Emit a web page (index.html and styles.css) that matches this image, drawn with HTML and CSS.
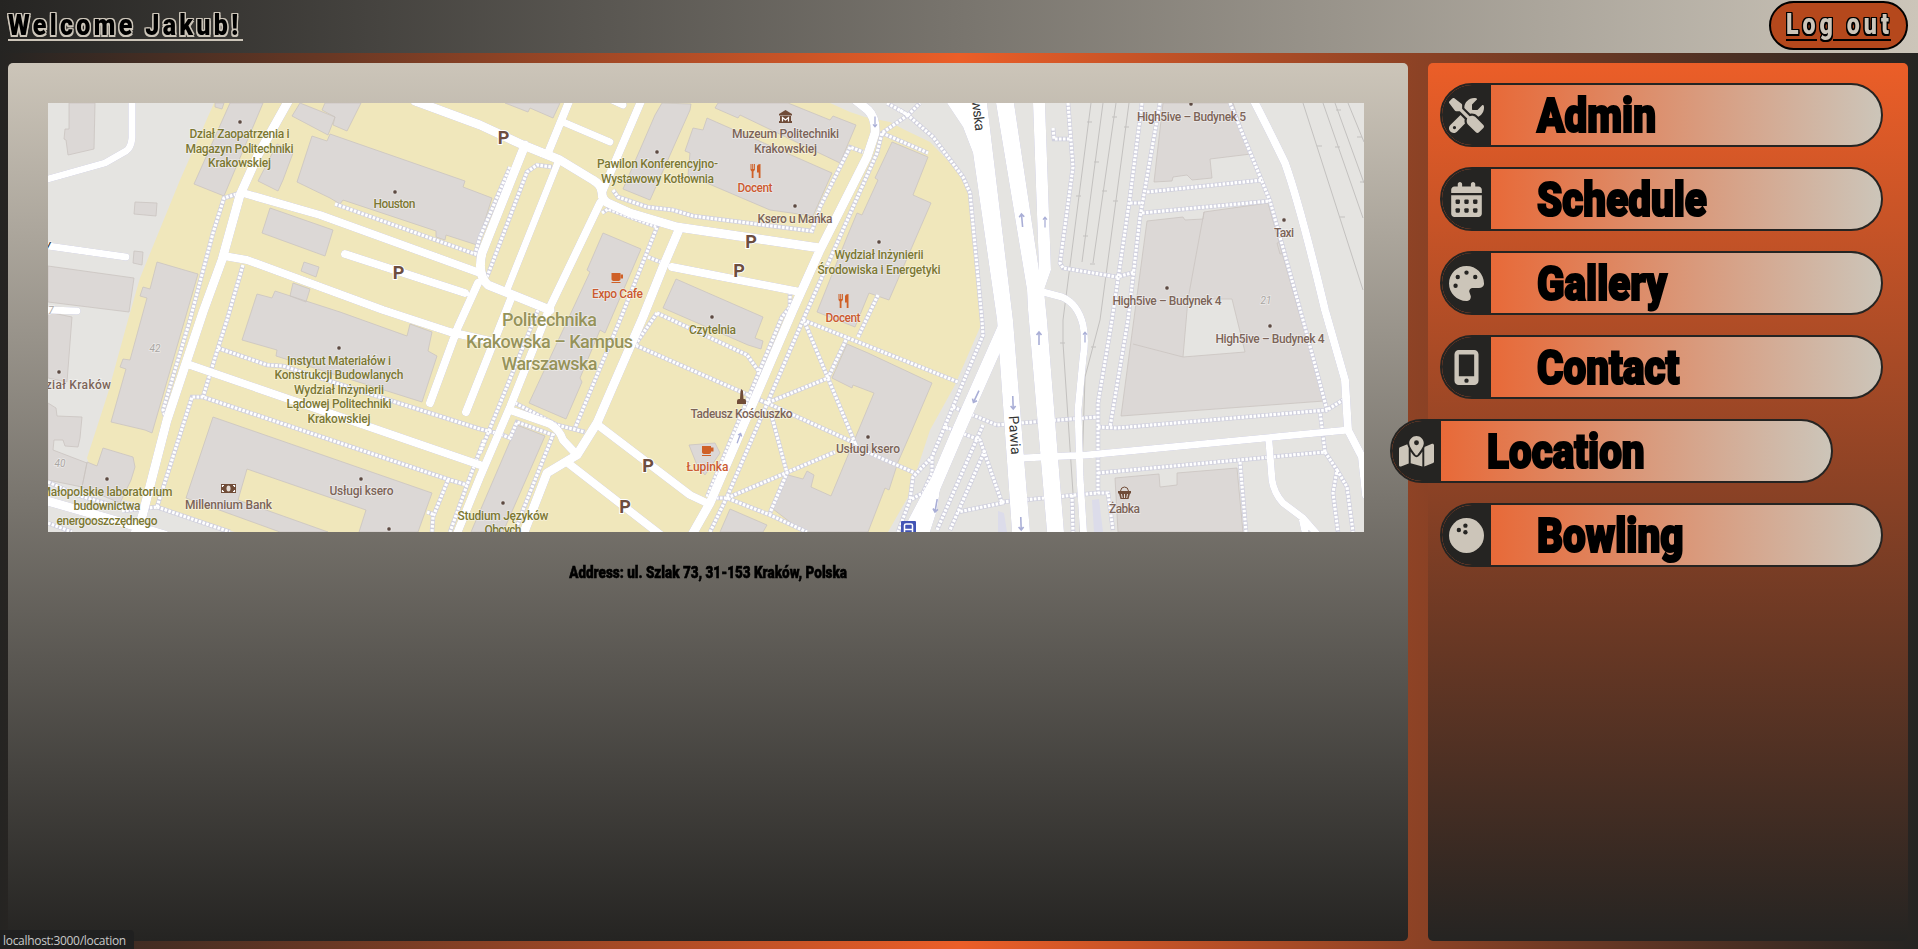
FILE: index.html
```html
<!DOCTYPE html>
<html lang="en">
<head>
<meta charset="utf-8">
<title>Location</title>
<link rel="stylesheet" href="styles.css">
</head>
<body>
<header class="topbar">
  <h1 class="welcome"><span class="squeeze">Welcome Jakub!</span></h1>
  <a class="logout"><span class="logout-line"><span class="squeeze">Log out</span></span></a>
</header>
<div class="layout">
<main class="content">
<svg class="map" viewBox="48 103 1316 429">
  <defs>
    <g id="walks">
      <path d="M240 193L224 198L213 233L190 320L163 410L166 419M243 265L227 320L218 348L203 397M218 348L267 365L283 366L367 393L480 429L500 434L510 438L517 422L553 435L523 510L515 532"/>
      <path d="M157 507L192 397L203 397L450 480L467 485M157 507L230 532M122 511L157 507M48 482L80 496L122 508M48 523L72 532M484 440L467 485L450 532M448 480L433 517L432 532M427 512L435 515"/>
      <path d="M335 204L475 254L480 237L510 167M487 277L527 172L537 165L552 167M613 190L618 197L647 207L673 210L693 216L780 227L812 231L820 207L850 147L863 152"/>
      <path d="M602 213L608 209L657 227L620 320L575 428M648 257L663 263M515 403L557 425L585 432M538 310L480 453M657 313L747 355L760 373M657 313L635 345L737 390L767 403"/>
      <path d="M887 103L908 115L920 103M908 115L882 133L877 153L803 320L727 497L710 532M882 133L928 153M790 292L790 307L782 317L707 497"/>
      <path d="M803 320L958 382M805 323L855 443L767 403L828 378L847 338M858 337L878 295M770 410L787 473L770 513M727 498L835 452M716 498L727 498L770 515L807 532M867 452L915 473"/>
      <path d="M900 110L910 117L933 137L963 177L970 193L982 320L983 335L962 385L932 457L913 477L910 500L898 532M932 457L932 473L923 493L910 500M943 427L948 429"/>
      <path d="M953 407L997 425L1033 422L1097 417M945 427L980 440L1002 503L958 512M983 425L937 530M985 450L950 530M1002 502L1097 493L1108 493L1113 530M1072 495L1073 532"/>
      <path d="M1068 103L1073 167L1060 263L1063 268L1117 277L1135 272M1053 128L1054 139L1070 139M1142 103L1130 197L1112 320L1098 403L1098 493M1160 103L1140 217L1128 320L1110 427M1147 192L1263 180M1142 213L1270 201M1130 203L1143 203"/>
      <path d="M1230 103L1270 201L1303 320L1327 410L1343 400M1098 427L1117 428L1327 410M1098 473L1325 452L1320 412M1325 452L1337 470L1333 493L1338 532M1337 470L1347 487L1353 532M1240 462L1246 532"/>
    </g>
    <g id="cup"><path d="M-6 -5H3V1Q3 3 0 3H-3Q-6 3 -6 1ZM-6 4H3V5H-6Z"/><path class="ring" d="M3 -3.500H5.500V0.500H3"/></g>
    <g id="fork"><path d="M-5 -7H-4V-2H-3.300V-7H-2.300V-2H-1.600V-7H-.6V-1L-2 .5V7H-3.800V.5L-5 -1ZM1.500 -5Q2 -7 5 -7V7H3.200V1.500H1.500Z"/></g>
    <g id="arrow"><path d="M0 7V-6M-2.500 -3L0 -6L2.500 -3"/></g>
  </defs>
  <rect class="ground" x="48" y="103" width="1316" height="429"/>
  <path class="campus" d="M214 103H830L850 112L865 117L890 122L905 130L930 142L955 168L968 190L972 215L981 325L955 385L930 430L908 497L888 532H235L155 507L100 495L87 458L108 393L128 320L140 278L180 180Z"/>
  <g class="buildings">
    <path d="M69 103H95L94 149L68 155L66 140L64 139L65 129H69ZM230 103H263L229 184L224 196L194 184ZM215 103H224L222 109L215 107ZM300 103L335 117L328 135L292 116ZM325 103H361L347 131L333 125L335 117L322 110ZM277 144L293 153L283 180L278 191L258 181Z"/>
    <path d="M312 136L327 141L330 134L465 181L463 187L492 198L477 245L446 235L445 240L436 237V231L343 200L340 204L330 198L297 182ZM270 208L333 230L325 256L262 233ZM135 202L157 203L156 216L134 214ZM134 251L143 252L142 265L133 263ZM48 266L134 278L129 312L48 302Z"/>
    <path d="M157 262L198 274L152 433L145 430L111 422L126 369L120 367L123 359L130 360L147 298L140 296L143 287L150 289ZM304 262L319 267L316 277L301 271ZM293 283L310 289L306 302L290 296ZM257 294L272 298L275 291L340 312L407 336L410 324L432 332L428 351L437 356L422 402L276 356L277 350L242 340Z"/>
    <path d="M48 312L72 317L67 382L48 378ZM48 403L56 408L57 416L82 417L80 438L78 447L65 446L63 440H54L53 450L87 463L82 487L48 480ZM103 448L133 457L135 467L131 480L120 503L82 487L87 462L97 466ZM213 417L432 493L418 532H359L366 510L247 469L238 500L328 532H280L186 498Z"/>
    <path d="M505 103H560L553 118L530 108L528 112ZM662 103L691 104L690 110L650 200L623 189L655 115ZM718 103H788L830 120L833 116L856 125L840 163L740 115L738 118L715 108ZM707 118L832 173L813 216L770 210L688 175L690 153L685 151L693 128L703 130Z"/>
    <path d="M892 142L928 157L913 195L931 203L889 300L869 293L855 327L817 312L847 237L857 213L862 215L878 180L875 178ZM603 233L641 249L605 333L600 330L580 378L582 382L566 419L529 403L590 272L587 270ZM676 279L763 317L755 338L763 341L761 349L748 345L663 308Z"/>
    <path d="M847 344L868 353L932 383L912 430L898 462L889 490L885 488L868 532H803L773 509L788 475L803 479L807 471L814 475L811 487L831 496L874 393L853 385L852 388L832 378ZM689 445L715 443L720 453L705 475L697 465ZM730 509L767 525L763 532H720ZM517 425L545 436L503 532H471Z"/>
    <g class="east">
      <path d="M1163 103H1233L1251 154L1210 159L1212 178L1192 180L1187 175L1173 177L1172 181L1154 182ZM1147 221L1183 217L1185 220L1203 219L1204 212L1268 203L1324 401L1121 416ZM1115 478L1159 474L1160 487L1177 485V473L1237 468L1243 532H1118ZM1277 243L1283 242L1286 253L1280 254Z"/>
      <path class="yard" d="M1188 299H1232L1245 352L1183 357Z"/>
      <path class="seam" d="M1204 212L1188 299M1133 344L1183 357"/>
    </g>
  </g>
  <g class="rails"><path d="M1091 103L1063 320V343L1073 493V532M1103 103L1082 262M1116 103L1093 263M1129 103L1100 320L1085 377L1080 532M1303 103L1363 290M1323 103L1363 218M1335 103L1364 183M1348 103L1364 142"/><path d="M1087 122h5M1112 117h5M1124 127h5M1094 162h5M1102 191h5M1076 196h5M1113 201h5M1083 236h5M1090 264h5M1060 343h5M1091 347h5M1317 146h5M1335 147h5M1336 110h5M1340 217h5M1357 137h5M1360 182h5"/></g>
  <use class="walk-edge" href="#walks"/>
  <use class="walk-dots" href="#walks"/>
  <g class="roads">
    <path class="w7" d="M132 98V138Q131 148 126 151L105 163L48 179M48 246L126 257M48 310L77 311M563 122L610 142M610 99L623 105M558 162L507 290M1043 292L1062 297Q1078 304 1083 325Q1086 340 1083 358L1078 410L1080 477L1084 540M1023 458L1087 455L1348 430M1269 442L1272 480Q1274 493 1283 503L1303 518L1317 534M1302 518L1306 536"/>
    <path class="w8" d="M243 193L320 215L480 273M224 256L247 260L383 310L450 332L499 343M345 254L465 293M570 99L548 153M642 99L603 190M478 283L458 327L430 403M512 296L466 412M600 203L550 307L510 407L480 477L456 536M190 365L480 465M672 267L713 275L800 292M510 410L550 424Q560 430 563 440L577 455M598 425L690 495L707 503M568 463L662 536M1253 99Q1273 138 1285 163Q1300 205 1325 310L1345 380L1348 430L1362 457L1366 495"/>
    <path class="w9" d="M290 98L258 155L240 195L222 260L203 312L167 420L142 517L132 540M44 500L145 529L165 535M415 101L480 125L523 145L560 160L593 180Q602 185 602 193Q602 200 608 203L630 213L677 227L820 248M525 145L482 253Q477 275 488 285L550 310M678 232L663 267L643 317L597 423L577 455L547 473L521 540M853 98L868 110Q876 118 875 133L867 157L820 250L793 310L710 503L689 540"/>
    <path class="w12" d="M1003 330L960 427L933 490L917 522"/>
    <path class="wide" d="M947 103H987L1013 320L1030 532H1012L1000 363L997 320L973 153L963 127ZM996 103H1014L1039 270L1033 103H1045L1051 270L1044 290L1047 320L1064 532H1047L1028 310L1027 290ZM945 455L937 510L930 532H902L924 490Z"/>
  </g>
  <path class="ramp" d="M998 511L1004 513L1007 532H998ZM1092 500L1099 499L1103 532H1094Z"/>
  <g class="arrows">
    <use href="#arrow" transform="translate(1022 220) rotate(-5)"/><use href="#arrow" transform="translate(1045 222) scale(.8)"/><use href="#arrow" transform="translate(1039 338)"/><use href="#arrow" transform="translate(1085 337) scale(.8)"/>
    <use href="#arrow" transform="translate(976 397) rotate(205)"/><use href="#arrow" transform="translate(1013 403) rotate(178)"/><use href="#arrow" transform="translate(936 506) rotate(190)"/><use href="#arrow" transform="translate(1021 524) rotate(178)"/><use href="#arrow" transform="translate(739 438) rotate(20) scale(.8)"/><use href="#arrow" transform="translate(875 122) rotate(180) scale(.8)"/>
  </g>
  <g class="dots">
    <circle cx="240" cy="122" r="2.200"/><circle cx="395" cy="192" r="2.200"/><circle cx="657" cy="152" r="2.200"/><circle cx="795" cy="206" r="2.200"/><circle cx="879" cy="242" r="2.200"/><circle cx="712" cy="317" r="2.200"/><circle cx="339" cy="348" r="2.200"/><circle cx="59" cy="372" r="2.200"/><circle cx="107" cy="479" r="2.200"/><circle cx="361" cy="479" r="2.200"/><circle cx="389" cy="529" r="2.200"/><circle cx="503" cy="503" r="2.200"/><circle cx="868" cy="437" r="2.200"/><circle cx="1191" cy="104" r="2.200"/><circle cx="1284" cy="220" r="2.200"/><circle cx="1167" cy="288" r="2.200"/><circle cx="1270" cy="326" r="2.200"/>
  </g>
  <g class="food"><use href="#cup" transform="translate(617.500 278)"/><use href="#cup" transform="translate(708 451)"/><use href="#fork" transform="translate(755.500 171)"/><use href="#fork" transform="translate(843.500 301)"/></g>
  <g class="poi">
    <path d="M779 114L785.500 110L792 114V115.500H779ZM780 116H791V121H792V123H779V121H780Z"/><path class="cut" d="M782.500 121.500V117.500L785.500 120L788.500 117.500V121.500"/>
    <path d="M740.500 391L741.500 389L743 391L743.500 399H740ZM737 404V401Q737 399 739 399H744.500Q746 399 746 401V404Z"/>
    <rect x="221" y="484" width="15" height="9"/><ellipse class="note" cx="228.500" cy="488.500" rx="2" ry="3"/><path class="cut" d="M222.500 487V485.500H224M233 485.500H234.500V487M222.500 490V491.500H224M233 491.500H234.500V490"/>
    <path d="M1118 491H1131V493.500H1130L1128.500 499H1120.500L1119 493.500H1118Z"/><path class="ring" d="M1120.500 491Q1121 487 1124.500 487Q1128 487 1128.500 491"/><path class="cut thin" d="M1121.500 494L1122.300 498M1124.500 494V498M1127.500 494L1126.700 498"/>
  </g>
  <path class="stop" d="M901 532V522Q901 521 902 521H915Q916 521 916 522V532Z"/><path class="stop-mark" d="M904.500 532V525.500Q904.500 524 906 524H911Q912.500 524 912.500 525.500V532M904.500 529.500H912.500"/>
  <g class="text olive">
    <text x="239.500" y="138" textLength="100">Dział Zaopatrzenia i</text><text x="239.500" y="152.500" textLength="108">Magazyn Politechniki</text><text x="239.500" y="167" textLength="63">Krakowskiej</text>
    <text x="394.500" y="208" textLength="42">Houston</text>
    <text x="657.500" y="168" textLength="121">Pawilon Konferencyjno-</text><text x="657.500" y="182.500" textLength="113">Wystawowy Kotłownia</text>
    <text x="879" y="259" textLength="89">Wydział Inżynierii</text><text x="879" y="273.500" textLength="123">Środowiska i Energetyki</text>
    <text x="712.500" y="334" textLength="47">Czytelnia</text>
    <text x="339" y="365" textLength="104">Instytut Materiałów i</text><text x="339" y="379.300" textLength="129">Konstrukcji Budowlanych</text><text x="339" y="393.700" textLength="90">Wydział Inżynierii</text><text x="339" y="408" textLength="105">Lądowej Politechniki</text><text x="339" y="422.500" textLength="63">Krakowskiej</text>
    <text x="106.500" y="496" textLength="132">Małopolskie laboratorium</text><text x="107" y="510" textLength="67">budownictwa</text><text x="107" y="524.500" textLength="101">energooszczędnego</text>
    <text x="503" y="519.500" textLength="91">Studium Języków</text><text x="503" y="534" textLength="37">Obcych</text>
  </g>
  <g class="text brown">
    <text x="785.500" y="138" textLength="107">Muzeum Politechniki</text><text x="785.500" y="152.500" textLength="63">Krakowskiej</text>
    <text x="795" y="222.500" textLength="75">Ksero u Mańka</text><text x="741.500" y="417.500" textLength="102">Tadeusz Kościuszko</text><text x="868" y="453" textLength="64">Usługi ksero</text>
    <text x="361.500" y="495" textLength="64">Usługi ksero</text><text x="228.500" y="509" textLength="87">Millennium Bank</text><text x="67" y="388.500" textLength="88">Oddział Kraków</text>
    <text x="1191.500" y="120.500" textLength="109">High5ive – Budynek 5</text><text x="1284" y="236.500" textLength="20">Taxi</text><text x="1167" y="304.500" textLength="109">High5ive – Budynek 4</text><text x="1270" y="343" textLength="109">High5ive – Budynek 4</text><text x="1124.500" y="512.500" textLength="31">Żabka</text>
  </g>
  <g class="text orange">
    <text x="755" y="191.500" textLength="35">Docent</text><text x="843" y="321.500" textLength="35">Docent</text><text x="617.500" y="298" textLength="51">Expo Cafe</text><text x="707.500" y="470.500" textLength="42">Łupinka</text>
  </g>
  <g class="text parking">
    <text x="398.500" y="279">P</text><text x="503.500" y="143.500">P</text><text x="751" y="247.500">P</text><text x="739" y="277">P</text><text x="648" y="472">P</text><text x="625" y="513">P</text>
  </g>
  <g class="text large">
    <text x="549.500" y="326" textLength="95">Politechnika</text><text x="549.500" y="347.500" textLength="167">Krakowska – Kampus</text><text x="549.500" y="369.500" textLength="96">Warszawska</text>
  </g>
  <g class="text number"><text x="155" y="352">42</text><text x="60" y="467">40</text><text x="1266" y="304">21</text><text x="51" y="314">7</text></g>
  <g class="text street"><text transform="translate(1010 435.500) rotate(86)" textLength="39">Pawia</text><text transform="translate(971 95) rotate(83)" textLength="73">Warszawska</text><text transform="translate(47 249) rotate(8)">y</text></g>
</svg>
<p class="address"><span class="squeeze">Address: ul. Szlak 73, 31-153 Kraków, Polska</span></p>
</main>
<nav class="sidebar">
  <a class="item"><span class="icon"><svg viewBox="0 0 512 512"><path d="M78.600 5C69.100-2.400 55.600-1.500 47 7L7 47c-8.500 8.500-9.400 22-2.100 31.600l80 104c4.500 5.900 11.600 9.400 19 9.400h54.100l109 109c-14.700 29-10 65.400 14.300 89.600l112 112c12.500 12.500 32.800 12.500 45.300 0l64-64c12.500-12.500 12.500-32.800 0-45.300l-112-112c-24.200-24.200-60.600-29-89.600-14.300l-109-109V104c0-7.500-3.500-14.500-9.400-19L78.600 5zM19.900 396.100C7.200 408.800 0 426.100 0 444.100C0 481.600 30.400 512 67.900 512c18 0 35.300-7.200 48-19.900L233.700 374.300c-7.800-20.900-9-43.600-3.600-65.100l-61.700-61.700L19.900 396.100zM512 144c0-10.500-1.100-20.700-3.200-30.500c-2.400-11.200-16.100-14.100-24.200-6l-63.900 63.900c-3 3-7.100 4.700-11.300 4.700H352c-8.800 0-16-7.200-16-16V102.600c0-4.200 1.700-8.300 4.700-11.300l63.900-63.900c8.100-8.100 5.200-21.800-6-24.200C388.700 1.100 378.500 0 368 0C288.500 0 224 64.500 224 144l0 .8 85.300 85.300c36-9.100 75.800 .5 104 28.700L429 274.500c49-23 83-72.800 83-130.500zM56 432a24 24 0 1 1 48 0 24 24 0 1 1 -48 0z"/></svg></span><span class="label squeeze">Admin</span></a>
  <a class="item"><span class="icon"><svg viewBox="0 0 448 512"><path d="M128 0c17.700 0 32 14.300 32 32V64H288V32c0-17.700 14.300-32 32-32s32 14.300 32 32V64h48c26.500 0 48 21.500 48 48v48H0V112C0 85.500 21.500 64 48 64H96V32c0-17.700 14.300-32 32-32zM0 192H448V464c0 26.500-21.500 48-48 48H48c-26.500 0-48-21.500-48-48V192z"/><g class="holes"><rect x="64" y="256" width="64" height="64" rx="16"/><rect x="192" y="256" width="64" height="64" rx="16"/><rect x="320" y="256" width="64" height="64" rx="16"/><rect x="64" y="384" width="64" height="64" rx="16"/><rect x="192" y="384" width="64" height="64" rx="16"/><rect x="320" y="384" width="64" height="64" rx="16"/></g></svg></span><span class="label squeeze">Schedule</span></a>
  <a class="item"><span class="icon"><svg viewBox="0 0 512 512"><path d="M512 256c0 .9 0 1.800 0 2.700c-.4 36.500-33.600 61.300-70.100 61.300H344c-26.500 0-48 21.500-48 48c0 3.400 .4 6.700 1 9.900c2.100 10.200 6.500 20 10.800 29.900c6.100 13.800 12.100 27.500 12.100 42c0 31.800-21.600 60.700-53.400 62c-3.500 .1-7 .2-10.600 .2C114.600 512 0 397.400 0 256S114.600 0 256 0S512 114.600 512 256zM128 288a32 32 0 1 0 -64 0 32 32 0 1 0 64 0zm0-96a32 32 0 1 0 0-64 32 32 0 1 0 0 64zM288 96a32 32 0 1 0 -64 0 32 32 0 1 0 64 0zm96 96a32 32 0 1 0 0-64 32 32 0 1 0 0 64z"/></svg></span><span class="label squeeze">Gallery</span></a>
  <a class="item"><span class="icon"><svg viewBox="0 0 384 512"><path d="M16 64C16 28.700 44.700 0 80 0H304c35.300 0 64 28.700 64 64V448c0 35.300-28.700 64-64 64H80c-35.300 0-64-28.700-64-64V64zM224 448a32 32 0 1 0 -64 0 32 32 0 1 0 64 0zM304 64H80V384H304V64z"/></svg></span><span class="label squeeze">Contact</span></a>
  <a class="item active"><span class="icon"><svg viewBox="0 0 576 512"><path d="M408 120c0 54.600-73.100 151.900-105.200 192c-7.700 9.600-22 9.600-29.600 0C241.100 271.900 168 174.600 168 120C168 53.700 221.700 0 288 0s120 53.700 120 120zm8 80.400c3.500-6.900 6.700-13.800 9.600-20.600c.5-1.200 1-2.500 1.500-3.700l116-46.400C558.900 123.400 576 135 576 152V422.800c0 9.800-6 18.600-15.100 22.300L416 503V200.400zM137.600 138.300c2.400 14.100 7.200 28.300 12.800 41.500c2.900 6.800 6.100 13.700 9.600 20.600V451.800L32.900 502.700C17.100 509 0 497.400 0 480.400V209.600c0-9.800 6-18.600 15.100-22.300l122.600-49zM327.800 332c13.900-17.400 35.700-45.700 56.200-77V504.300L192 449.400V255c20.500 31.300 42.300 59.600 56.200 77c20.500 25.600 59.100 25.600 79.600 0zM288 152a40 40 0 1 0 0-80 40 40 0 1 0 0 80z"/></svg></span><span class="label squeeze">Location</span></a>
  <a class="item"><span class="icon"><svg viewBox="0 0 512 512"><circle cx="256" cy="256" r="256"/><g class="holes"><circle cx="144" cy="176" r="32"/><circle cx="240" cy="112" r="32"/><circle cx="240" cy="208" r="32"/></g></svg></span><span class="label squeeze">Bowling</span></a>
</nav>
</div>
<div class="status">localhost:3000/location</div>
</body>
</html>
```
FILE: styles.css
```css
* { box-sizing: border-box; }
body {
  margin: 0;
  height: 949px;
  overflow: hidden;
  display: flex;
  flex-direction: column;
  background: linear-gradient(to right, #252422, #eb5e28, #252422);
  font-family: Impact, Roboto, "Liberation Sans", sans-serif;
  color: #000;
}
.squeeze { display: inline-block; transform-origin: left center; white-space: nowrap; font-weight: 900; }
.topbar {
  height: 53px;
  flex: none;
  display: flex;
  justify-content: space-between;
  padding: 1px 10px 0 8px;
  background: linear-gradient(to right, #252422, #ccc5b9);
}
.welcome {
  margin: 5px 0 0;
  width: 235px;
  height: 35px;
  border-bottom: 2px solid #ccc5b9;
  font-size: 30px;
  line-height: 37px;
  font-weight: 400;
  letter-spacing: 4px;
  text-shadow: 1.5px 0 #ccc5b9, -1.5px 0 #ccc5b9, 0 1.5px #ccc5b9, 0 -1.5px #ccc5b9, 1.5px 1.5px #ccc5b9, -1.5px 1.5px #ccc5b9, 1.5px -1.5px #ccc5b9, -1.5px -1.5px #ccc5b9;
}
.welcome .squeeze { transform: scaleX(.835); }
.logout {
  width: 139px;
  height: 49px;
  padding: 3px 0 0 15px;
  border: 2px solid #000;
  border-radius: 25px;
  background: #b5481c;
  color: #ccc5b9;
  font-size: 29px;
  line-height: 36px;
  letter-spacing: 5px;
  text-shadow: 1.5px 0 #000, -1.5px 0 #000, 0 1.5px #000, 0 -1.5px #000, 1.5px 1.5px #000, -1.5px 1.5px #000, 1.5px -1.5px #000, -1.5px -1.5px #000;
}
.logout-line {
  display: block;
  width: 105px;
  height: 35px;
  background: linear-gradient(to right, #000 31px, transparent 31px 47px, #000 47px) 0 100% / 100% 2px no-repeat;
}
.logout .squeeze { transform: scaleX(.8); }
.layout { flex: 1; display: flex; gap: 20px; padding: 10px 10px 8px 8px; }
.content {
  width: 1400px;
  padding: 40px 44px 0 40px;
  border-radius: 5px;
  background: linear-gradient(#ccc5b9, #252422);
}
.map { display: block; width: 1316px; height: 429px; font-family: Roboto, "Liberation Sans", sans-serif; }
.address { margin: 29px 0 0; width: 1320px; text-align: center; font-size: 17px; line-height: 22px; }
.address .squeeze { transform: scaleX(.793); transform-origin: center; -webkit-text-stroke: .6px #000; }
.sidebar {
  flex: 1;
  display: flex;
  flex-direction: column;
  gap: 20px;
  padding: 20px 12px;
  border-radius: 5px;
  background: linear-gradient(#eb5e28, #252422);
}
.item {
  display: flex;
  width: 443px;
  height: 64px;
  overflow: hidden;
  border: 2px solid #252422;
  border-radius: 32px;
  background: linear-gradient(to right, #eb5e28, #ccc5b9);
}
.active { transform: translateX(-50px); }
.icon { width: 49px; flex: none; display: flex; align-items: center; justify-content: center; background: #252422; }
.icon svg { width: 35px; height: 35px; fill: #ccc5b9; }
.icon .holes { fill: #252422; }
.label { margin-left: 46px; font-size: 49px; line-height: 61px; transform: scaleX(.825); -webkit-text-stroke: 2.2px #000; }
.status {
  position: absolute;
  left: 0;
  bottom: 0;
  width: 134px;
  height: 19px;
  padding-left: 3px;
  border-top-right-radius: 4px;
  background: #202020;
  color: #c9c9c9;
  font: 12px/22px "Open Sans", "Noto Sans", sans-serif;
  letter-spacing: -.3px;
}

.ground { fill: #e5e4e1; }
.campus { fill: #f0e7bb; }
.buildings { fill: #dcd8d6; stroke: #cac4c0; stroke-width: .8; }
.buildings .yard { fill: #e5e4e1; }
.buildings .seam { fill: none; }
.rails { fill: none; stroke: #c3c1bf; stroke-width: 1; }
.walk-edge { fill: none; stroke: #d0d0de; stroke-width: 4.500; }
.walk-dots { fill: none; stroke: #fff; stroke-width: 3.200; stroke-dasharray: 2.600 1.400; }
.roads { fill: none; stroke: #fff; stroke-linecap: round; stroke-linejoin: round; filter: drop-shadow(0 0 .7px #aaaacf); }
.w7 { stroke-width: 7; }
.w8 { stroke-width: 8; }
.w9 { stroke-width: 9; }
.w12 { stroke-width: 13; }
.wide { fill: #fff; stroke: none; }
.ramp { fill: #dcdcea; }
.arrows { fill: none; stroke: #a9aed6; stroke-width: 1.600; }
.dots { fill: #5d4a42; stroke: #fff; stroke-width: .6; }
.food { fill: #cf6027; }
.food .ring { fill: none; stroke: #cf6027; }
.poi { fill: #704c38; }
.poi .cut { fill: none; stroke: #fff; stroke-width: 1.200; }
.poi .thin { stroke-width: .8; }
.poi .note { fill: #e5dcd5; }
.poi .ring { fill: none; stroke: #704c38; }
.stop { fill: #4254b5; }
.stop-mark { fill: none; stroke: #fff; stroke-width: 1.500; }
.text { font-size: 12px; font-weight: 500; text-anchor: middle; paint-order: stroke; stroke: rgba(255, 255, 255, .45); stroke-width: 1.500px; }
.olive { fill: #7c7833; }
.brown { fill: #7c6458; }
.orange { fill: #cb5a30; }
.parking { font-size: 18px; font-weight: 700; fill: #6d4e3f; stroke: #fff; stroke-width: 2px; }
.large { font-size: 18px; font-weight: 500; fill: #96935a; }
.number { font-size: 10px; font-style: italic; font-weight: 400; fill: #aaa6a3; }
.street { font-size: 14px; font-weight: 400; fill: #333; }
```
